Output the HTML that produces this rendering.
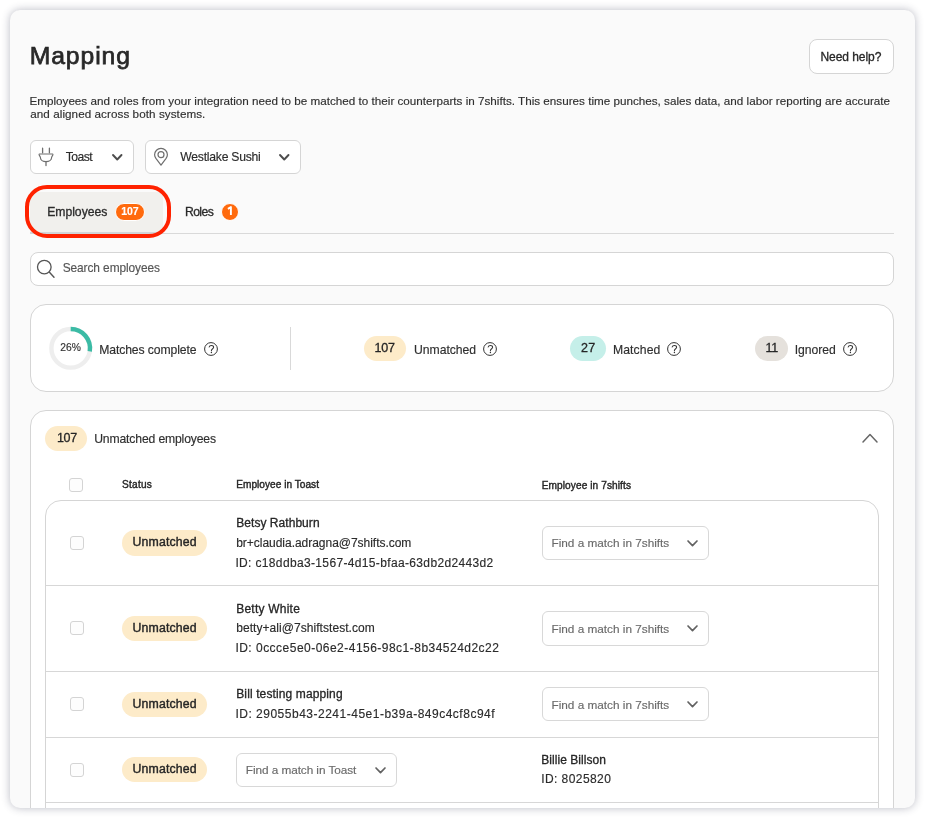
<!DOCTYPE html>
<html><head><meta charset="utf-8">
<style>
*{box-sizing:border-box;margin:0;padding:0}
html,body{width:925px;height:818px;overflow:hidden;background:#ffffff;font-family:"Liberation Sans",sans-serif;color:#2b2b2b}
.frame{will-change:transform;position:absolute;left:10px;top:10px;width:905px;height:798px;border-radius:10px;background:#fafafa;box-shadow:0 0 8px rgba(40,45,70,.32);overflow:hidden}
.t{position:absolute;white-space:nowrap;line-height:1;-webkit-text-stroke:0.15px currentColor}
.box{position:absolute;background:#fff;border:1px solid #d5d5d5}
.ln{position:absolute}
.pill{position:absolute;text-align:center;border-radius:999px;white-space:nowrap}
.cb{position:absolute;width:14px;height:14px;border:1px solid #d4d4d4;border-radius:3px;background:#fdfdfd}
svg{position:absolute;overflow:visible}
</style></head><body>
<div class="frame">
<div id="title" class="t" style="left:19.68px;top:34.35px;font-size:24.7px;color:#282828;-webkit-text-stroke:0.75px currentColor;letter-spacing:0.932px;">Mapping</div>
<div class="box" style="left:799.0px;top:29.0px;width:85.0px;height:35.0px;border-radius:8px;"></div>
<div id="help" class="t" style="left:810.48px;top:40.58px;font-size:12px;color:#262626;-webkit-text-stroke:0.3px currentColor;letter-spacing:-0.060px;">Need help?</div>
<div id="desc1" class="t" style="left:19.44px;top:84.63px;font-size:11.68px;color:#2f2f2f;letter-spacing:0.003px;">Employees and roles from your integration need to be matched to their counterparts in 7shifts. This ensures time punches, sales data, and labor reporting are accurate</div>
<div id="desc2" class="t" style="left:20.24px;top:98.09px;font-size:11.68px;color:#2f2f2f;letter-spacing:0.061px;">and aligned across both systems.</div>
<div class="box" style="left:20.0px;top:130.0px;width:104.0px;height:34.0px;border-radius:6px;"></div>
<svg style="left:28.0px;top:137.0px" width="16" height="20" viewBox="0 0 16 20"><path d="M4.6 1.2 V5.8 M11.4 1.2 V5.8" stroke="#6f6f6f" stroke-width="1.3" stroke-linecap="round" fill="none"/><path d="M1.4 7 H14.6 C14.9 7 15 7.4 14.8 7.9 L14.2 9.2 C13.9 9.6 13.6 10 13.6 10.6 C13.6 13 11 14.7 8 14.7 C5 14.7 2.4 13 2.4 10.6 C2.4 10 2.1 9.6 1.8 9.2 L1.2 7.9 C1 7.4 1.1 7 1.4 7 Z" stroke="#6f6f6f" stroke-width="1.2" fill="none" stroke-linejoin="round"/><path d="M8 14.7 V18.5" stroke="#6f6f6f" stroke-width="1.3" stroke-linecap="round"/></svg>
<div id="toast" class="t" style="left:55.74px;top:140.67px;font-size:12.2px;color:#2b2b2b;letter-spacing:-0.560px;">Toast</div>
<svg style="left:102.0px;top:144.3px" width="10.5" height="6.5" viewBox="0 0 10.5 6.5"><path d="M1 1 L5.25 5.5 L9.5 1" fill="none" stroke="#4d4d4d" stroke-width="1.9" stroke-linecap="round" stroke-linejoin="round"/></svg>
<div class="box" style="left:135.0px;top:130.0px;width:156.0px;height:34.0px;border-radius:6px;"></div>
<svg style="left:143.0px;top:137.0px" width="16" height="20" viewBox="0 0 16 20"><path d="M8 18.2 L2.9 11.4 C2.2 10.4 1.6 9.2 1.6 7.8 A6.4 6.4 0 0 1 14.4 7.8 C14.4 9.2 13.8 10.4 13.1 11.4 Z" stroke="#6f6f6f" stroke-width="1.2" fill="none" stroke-linejoin="round"/><circle cx="8" cy="7.7" r="3" stroke="#6f6f6f" stroke-width="1.2" fill="none"/></svg>
<div id="westlake" class="t" style="left:170.24px;top:140.67px;font-size:12.2px;color:#2b2b2b;letter-spacing:-0.247px;">Westlake Sushi</div>
<svg style="left:268.8px;top:144.3px" width="10.5" height="6.5" viewBox="0 0 10.5 6.5"><path d="M1 1 L5.25 5.5 L9.5 1" fill="none" stroke="#4d4d4d" stroke-width="1.9" stroke-linecap="round" stroke-linejoin="round"/></svg>
<div class="ln" style="left:20.0px;top:223.0px;width:864.0px;height:1px;background:#d9d9d9"></div>
<div class="ln" style="left:20px;top:182px;width:133px;height:40px;background:#f1f0ed"></div>
<div class="ln" style="left:20px;top:222px;width:133px;height:2px;background:#d2d4d7"></div>
<div class="ln" style="left:15px;top:175px;width:146px;height:53px;border:4px solid #ff2200;border-radius:22px"></div>
<div id="tab1" class="t" style="left:37.20px;top:196.45px;font-size:12.2px;color:#2b2b2b;-webkit-text-stroke:0.3px currentColor;letter-spacing:-0.020px;">Employees</div>
<div class="pill" style="left:105.0px;top:193.0px;width:30px;height:18px;background:#ff6a0d;border:1px solid #fff"></div>
<div id="badge107" class="t" style="left:111.30px;top:195.71px;font-size:10.5px;color:#fff;font-weight:700;letter-spacing:-0.100px;">107</div>
<div id="tab2" class="t" style="left:174.98px;top:196.45px;font-size:12.2px;color:#2b2b2b;-webkit-text-stroke:0.3px currentColor;letter-spacing:-0.600px;">Roles</div>
<div class="pill" style="left:211.0px;top:193.0px;width:18px;height:18px;background:#ff6a0d;border:1px solid #fff"></div>
<svg style="left:216.0px;top:196.0px" width="8" height="10" viewBox="0 0 8 10"><path d="M1.9 2.9 L4.9 1.1 V9" fill="none" stroke="#fff" stroke-width="1.9" stroke-linejoin="round"/></svg>
<div class="box" style="left:20.0px;top:242.0px;width:864.0px;height:34.0px;border-radius:8px;"></div>
<svg style="left:26.0px;top:249.0px" width="20" height="20" viewBox="0 0 20 20"><circle cx="8.3" cy="8.1" r="6.8" stroke="#555" stroke-width="1.3" fill="none"/><path d="M13.2 13 L18 18.3" stroke="#555" stroke-width="1.4" stroke-linecap="round"/></svg>
<div id="search" class="t" style="left:52.68px;top:253.47px;font-size:11.9px;color:#565656;letter-spacing:-0.079px;">Search employees</div>
<div class="box" style="left:20.0px;top:294.0px;width:864.0px;height:88.0px;border-radius:16px;"></div>
<svg style="left:0;top:0" width="905" height="798" viewBox="0 0 905 798"><circle cx="60.7" cy="338.3" r="19.3" stroke="#eeeeee" stroke-width="4.4" fill="none"/><path d="M60.7 319.0 A19.3 19.3 0 0 1 79.76 341.32" stroke="#3bbba5" stroke-width="4.4" fill="none"/></svg>
<div id="pct" class="t" style="left:50.22px;top:333.08px;font-size:10.3px;color:#333;letter-spacing:0.080px;">26%</div>
<div id="mc" class="t" style="left:89.20px;top:333.71px;font-size:12.2px;color:#2f2f2f;letter-spacing:-0.106px;">Matches complete</div>
<svg style="left:194.0px;top:331.9px" width="14" height="14" viewBox="0 0 14 14"><circle cx="7" cy="7" r="6.4" fill="none" stroke="#333" stroke-width="1.0"/><path d="M5.2 5 C5.4 3.9 6.3 3.4 7.4 3.4 C8.7 3.4 9.6 4.2 9.6 5.3 C9.6 6.4 8.6 6.8 8 7.3 C7.6 7.7 7.4 8 7.4 8.7" fill="none" stroke="#333" stroke-width="1.05" stroke-linecap="round"/><circle cx="7.4" cy="10.5" r="0.72" fill="#333"/></svg>
<div class="ln" style="left:280.0px;top:317.0px;width:1px;height:43.0px;background:#d9d9d9"></div>
<div class="pill" style="left:354.0px;top:325.8px;width:42.0px;height:25.1px;background:#fdebc9;font-size:12.5px;line-height:25.1px;color:#262626;"></div>
<div id="s107" class="t" style="left:364.44px;top:331.96px;font-size:12.5px;color:#262626;-webkit-text-stroke:0.3px currentColor;letter-spacing:-0.200px;">107</div>
<div id="sun" class="t" style="left:403.98px;top:333.71px;font-size:12.2px;color:#2f2f2f;letter-spacing:-0.020px;">Unmatched</div>
<svg style="left:473.0px;top:331.9px" width="14" height="14" viewBox="0 0 14 14"><circle cx="7" cy="7" r="6.4" fill="none" stroke="#333" stroke-width="1.0"/><path d="M5.2 5 C5.4 3.9 6.3 3.4 7.4 3.4 C8.7 3.4 9.6 4.2 9.6 5.3 C9.6 6.4 8.6 6.8 8 7.3 C7.6 7.7 7.4 8 7.4 8.7" fill="none" stroke="#333" stroke-width="1.05" stroke-linecap="round"/><circle cx="7.4" cy="10.5" r="0.72" fill="#333"/></svg>
<div class="pill" style="left:560.0px;top:325.8px;width:36.4px;height:25.1px;background:#c5efe9;font-size:12.5px;line-height:25.1px;color:#262626;"></div>
<div id="s27" class="t" style="left:570.96px;top:331.96px;font-size:12.5px;color:#262626;-webkit-text-stroke:0.3px currentColor;letter-spacing:0.300px;">27</div>
<div id="sma" class="t" style="left:602.96px;top:333.71px;font-size:12.2px;color:#2f2f2f;letter-spacing:0.102px;">Matched</div>
<svg style="left:657.0px;top:331.9px" width="14" height="14" viewBox="0 0 14 14"><circle cx="7" cy="7" r="6.4" fill="none" stroke="#333" stroke-width="1.0"/><path d="M5.2 5 C5.4 3.9 6.3 3.4 7.4 3.4 C8.7 3.4 9.6 4.2 9.6 5.3 C9.6 6.4 8.6 6.8 8 7.3 C7.6 7.7 7.4 8 7.4 8.7" fill="none" stroke="#333" stroke-width="1.05" stroke-linecap="round"/><circle cx="7.4" cy="10.5" r="0.72" fill="#333"/></svg>
<div class="pill" style="left:745.0px;top:325.8px;width:33.0px;height:25.1px;background:#e5e1dc;font-size:12.5px;line-height:25.1px;color:#262626;"></div>
<div id="s11" class="t" style="left:755.54px;top:331.96px;font-size:12.5px;color:#262626;-webkit-text-stroke:0.3px currentColor;letter-spacing:-0.300px;">11</div>
<div id="sig" class="t" style="left:784.70px;top:333.71px;font-size:12.2px;color:#2f2f2f;letter-spacing:-0.056px;">Ignored</div>
<svg style="left:833.2px;top:331.9px" width="14" height="14" viewBox="0 0 14 14"><circle cx="7" cy="7" r="6.4" fill="none" stroke="#333" stroke-width="1.0"/><path d="M5.2 5 C5.4 3.9 6.3 3.4 7.4 3.4 C8.7 3.4 9.6 4.2 9.6 5.3 C9.6 6.4 8.6 6.8 8 7.3 C7.6 7.7 7.4 8 7.4 8.7" fill="none" stroke="#333" stroke-width="1.05" stroke-linecap="round"/><circle cx="7.4" cy="10.5" r="0.72" fill="#333"/></svg>
<div class="box" style="left:20.0px;top:400.0px;width:864.0px;height:490.0px;border-radius:16px;"></div>
<div class="pill" style="left:35.2px;top:415.7px;width:42.1px;height:25.0px;background:#fdebc9;font-size:12.5px;line-height:25.0px;color:#262626;"></div>
<div id="c107" class="t" style="left:46.94px;top:422.48px;font-size:12.5px;color:#262626;-webkit-text-stroke:0.3px currentColor;letter-spacing:-0.300px;">107</div>
<div id="cue" class="t" style="left:84.22px;top:422.95px;font-size:12.2px;color:#2f2f2f;letter-spacing:-0.155px;">Unmatched employees</div>
<svg style="left:852.0px;top:423.0px" width="16" height="10" viewBox="0 0 16 10"><path d="M1 9 L8 1.6 L15 9" fill="none" stroke="#666" stroke-width="1.5" stroke-linecap="round" stroke-linejoin="round"/></svg>
<div class="cb" style="left:59.0px;top:468.0px"></div>
<div id="hstatus" class="t" style="left:112.00px;top:470.25px;font-size:10.1px;color:#262626;-webkit-text-stroke:0.4px currentColor;letter-spacing:0.256px;">Status</div>
<div id="htoast" class="t" style="left:226.22px;top:469.73px;font-size:10.1px;color:#262626;-webkit-text-stroke:0.4px currentColor;letter-spacing:0.030px;">Employee in Toast</div>
<div id="h7" class="t" style="left:531.72px;top:470.51px;font-size:10.1px;color:#262626;-webkit-text-stroke:0.4px currentColor;letter-spacing:0.094px;">Employee in 7shifts</div>
<div class="box" style="left:35.0px;top:490.0px;width:834.0px;height:400.0px;border-radius:16px;"></div>
<div class="ln" style="left:36.0px;top:575.0px;width:832.0px;height:1px;background:#d7d7d7"></div>
<div class="ln" style="left:36.0px;top:661.0px;width:832.0px;height:1px;background:#d7d7d7"></div>
<div class="ln" style="left:36.0px;top:727.0px;width:832.0px;height:1px;background:#d7d7d7"></div>
<div class="ln" style="left:36.0px;top:792.0px;width:832.0px;height:1px;background:#d7d7d7"></div>
<div class="cb" style="left:60.0px;top:526.0px"></div>
<div class="pill" style="left:112.0px;top:520.0px;width:84.6px;height:25.5px;background:#fdebc9;font-size:12.5px;line-height:25.5px;color:#262626;"></div>
<div id="pu0" class="t" style="left:122.44px;top:526.35px;font-size:12.3px;color:#262626;-webkit-text-stroke:0.4px currentColor;letter-spacing:0.160px;">Unmatched</div>
<div id="r0l0" class="t" style="left:226.22px;top:507.08px;font-size:12px;color:#262626;-webkit-text-stroke:0.3px currentColor;letter-spacing:0.049px;">Betsy Rathburn</div>
<div id="r0l1" class="t" style="left:226.22px;top:527.12px;font-size:12px;color:#2b2b2b;letter-spacing:-0.028px;">br+claudia.adragna@7shifts.com</div>
<div id="r0l2" class="t" style="left:225.42px;top:546.58px;font-size:12px;color:#2b2b2b;letter-spacing:0.350px;">ID: c18ddba3-1567-4d15-bfaa-63db2d2443d2</div>
<div class="box" style="left:532.0px;top:516.0px;width:167.0px;height:34.0px;border-radius:6px;border-color:#d8d8d8;"></div><div id="dd0" class="t" style="left:541.46px;top:527.55px;font-size:11.8px;color:#6a6a6a;letter-spacing:-0.010px;">Find a match in 7shifts</div><svg style="left:676.5px;top:529.7px" width="11" height="6.6" viewBox="0 0 11 6.6"><path d="M1 1 L5.5 5.6 L10 1" fill="none" stroke="#626262" stroke-width="1.7" stroke-linecap="round" stroke-linejoin="round"/></svg>
<div class="cb" style="left:60.0px;top:611.3px"></div>
<div class="pill" style="left:112.0px;top:605.5px;width:84.6px;height:25.0px;background:#fdebc9;font-size:12.5px;line-height:25.0px;color:#262626;"></div>
<div id="pu1" class="t" style="left:122.44px;top:611.59px;font-size:12.3px;color:#262626;-webkit-text-stroke:0.4px currentColor;letter-spacing:0.160px;">Unmatched</div>
<div id="r1l0" class="t" style="left:226.22px;top:593.36px;font-size:12px;color:#262626;-webkit-text-stroke:0.3px currentColor;letter-spacing:0.224px;">Betty White</div>
<div id="r1l1" class="t" style="left:226.22px;top:611.84px;font-size:12px;color:#2b2b2b;letter-spacing:0.055px;">betty+ali@7shiftstest.com</div>
<div id="r1l2" class="t" style="left:225.42px;top:632.34px;font-size:12px;color:#2b2b2b;letter-spacing:0.478px;">ID: 0ccce5e0-06e2-4156-98c1-8b34524d2c22</div>
<div class="box" style="left:532.0px;top:601.0px;width:167.0px;height:35.0px;border-radius:6px;border-color:#d8d8d8;"></div><div id="dd1" class="t" style="left:541.46px;top:613.59px;font-size:11.8px;color:#6a6a6a;letter-spacing:-0.010px;">Find a match in 7shifts</div><svg style="left:676.5px;top:615.2px" width="11" height="6.6" viewBox="0 0 11 6.6"><path d="M1 1 L5.5 5.6 L10 1" fill="none" stroke="#626262" stroke-width="1.7" stroke-linecap="round" stroke-linejoin="round"/></svg>
<div class="cb" style="left:60.0px;top:687.2px"></div>
<div class="pill" style="left:112.0px;top:681.5px;width:84.6px;height:25.0px;background:#fdebc9;font-size:12.5px;line-height:25.0px;color:#262626;"></div>
<div id="pu2" class="t" style="left:122.44px;top:687.59px;font-size:12.3px;color:#262626;-webkit-text-stroke:0.4px currentColor;letter-spacing:0.160px;">Unmatched</div>
<div id="r2l0" class="t" style="left:226.22px;top:677.84px;font-size:12px;color:#262626;-webkit-text-stroke:0.3px currentColor;letter-spacing:0.122px;">Bill testing mapping</div>
<div id="r2l1" class="t" style="left:225.42px;top:697.60px;font-size:12px;color:#2b2b2b;letter-spacing:0.504px;">ID: 29055b43-2241-45e1-b39a-849c4cf8c94f</div>
<div class="box" style="left:532.0px;top:677.0px;width:167.0px;height:34.0px;border-radius:6px;border-color:#d8d8d8;"></div><div id="dd2" class="t" style="left:541.46px;top:689.59px;font-size:11.8px;color:#6a6a6a;letter-spacing:-0.010px;">Find a match in 7shifts</div><svg style="left:676.5px;top:690.7px" width="11" height="6.6" viewBox="0 0 11 6.6"><path d="M1 1 L5.5 5.6 L10 1" fill="none" stroke="#626262" stroke-width="1.7" stroke-linecap="round" stroke-linejoin="round"/></svg>
<div class="cb" style="left:60.0px;top:753.3px"></div>
<div class="pill" style="left:112.0px;top:747.0px;width:84.6px;height:25.0px;background:#fdebc9;font-size:12.5px;line-height:25.0px;color:#262626;"></div>
<div id="pu3" class="t" style="left:122.44px;top:753.35px;font-size:12.3px;color:#262626;-webkit-text-stroke:0.4px currentColor;letter-spacing:0.160px;">Unmatched</div>
<div class="box" style="left:226.0px;top:743.0px;width:161.0px;height:34.0px;border-radius:6px;border-color:#d8d8d8;"></div><div id="ddt" class="t" style="left:235.84px;top:754.77px;font-size:11.8px;color:#6a6a6a;letter-spacing:-0.072px;">Find a match in Toast</div><svg style="left:364.5px;top:756.7px" width="11" height="6.6" viewBox="0 0 11 6.6"><path d="M1 1 L5.5 5.6 L10 1" fill="none" stroke="#626262" stroke-width="1.7" stroke-linecap="round" stroke-linejoin="round"/></svg>
<div id="bb" class="t" style="left:531.20px;top:744.08px;font-size:12px;color:#262626;-webkit-text-stroke:0.3px currentColor;letter-spacing:0.062px;">Billie Billson</div>
<div id="bbid" class="t" style="left:531.20px;top:763.08px;font-size:12px;color:#2b2b2b;letter-spacing:0.432px;">ID: 8025820</div>
</div>
</body></html>
